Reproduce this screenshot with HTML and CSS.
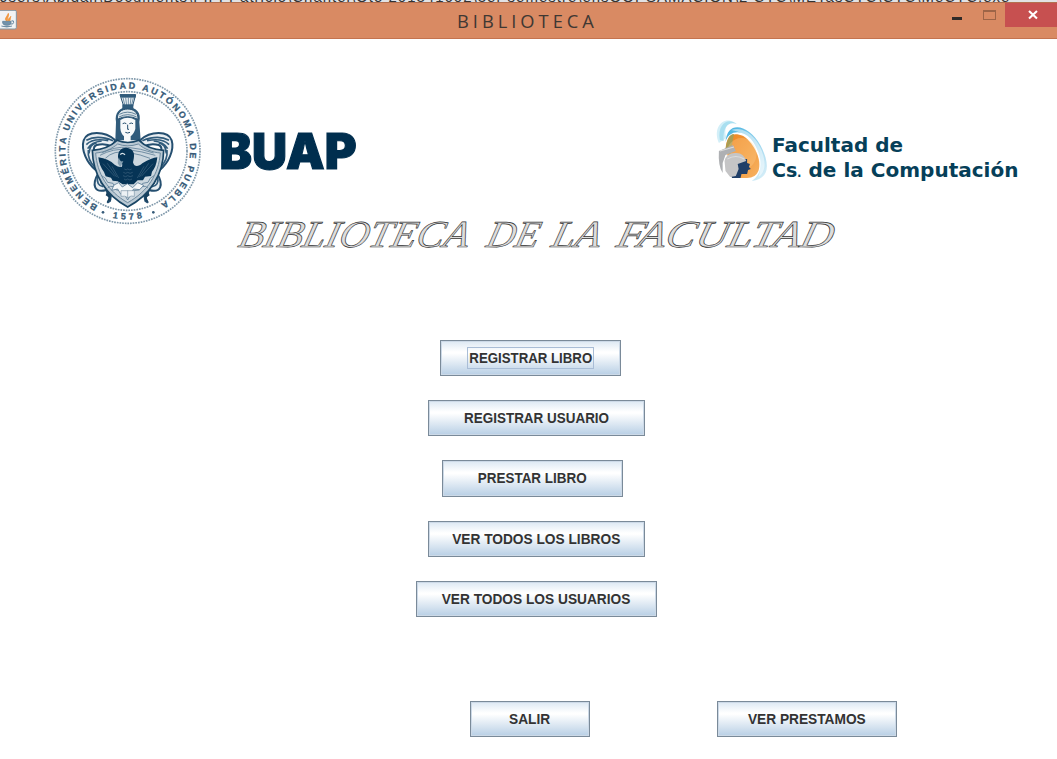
FILE: index.html
```html
<!DOCTYPE html>
<html lang="es">
<head>
<meta charset="utf-8">
<title>BIBLIOTECA</title>
<link rel="stylesheet" href="styles.css">
</head>
<body>
<div class="behind"><span>Jsers\Abigail\Documents\FIFI Patricio\Chantel\Oto 201341602\3er semestre\ensOOPSAMACION\2 CTC\METasCTC\CTC\MeCTC.exe</span></div>
<header class="titlebar">
  <svg class="java" width="17" height="20" viewBox="0 0 51 60">
    <rect x="-6" y="1" width="55" height="56" rx="4" fill="#f1f3f5" stroke="#8195a3" stroke-width="3"/>
    <path d="M22 35C10 27 19 24 25 10C29 18 19 23 24 35M26 34C23 27 28 24 33 19C29 26 33 28 28 35" fill="#f59a42" stroke="#ef8b2e" stroke-width="2"/>
    <path d="M8 34h25v5q0 7-12 7T8 39zM4 48q17 6 32 0" fill="#7191aa" stroke="#64859e" stroke-width="2.5"/>
    <path d="M34 33q8-3 7 4t-9 5" fill="none" stroke="#64859e" stroke-width="3"/>
  </svg>
  <h1 class="caption">BIBLIOTECA</h1>
  <div class="controls">
    <span class="min"></span>
    <span class="max"></span>
    <span class="close"><svg width="12" height="12" viewBox="0 0 12 12"><path d="M2 2l8 7.5M10 2L2 9.5" stroke="#fff" stroke-width="2.1"/></svg></span>
  </div>
</header>
<main>
  <div class="logos">
    <svg class="seal" width="165" height="160" viewBox="0 0 495 480">
      <defs>
        <path id="ring" d="M158 407A187 187 0 1 1 338 407"/>
        <path id="foot" d="M150 424A206 206 0 0 0 346 424"/>
      </defs>
      <g fill="none" stroke="#7f98aa" stroke-width="5" stroke-dasharray="5 3">
        <circle cx="248" cy="243" r="217"/>
        <circle cx="248" cy="243" r="178"/>
      </g>
      <g fill="#355a78" stroke="#355a78" stroke-width=".8" font-family="Liberation Sans, sans-serif" font-weight="700" font-size="27">
        <text textLength="976"><textPath href="#ring" textLength="976">BENEMÉRITA UNIVERSIDAD AUTÓNOMA DE PUEBLA</textPath></text>
        <text letter-spacing="10" text-anchor="middle"><textPath href="#foot" startOffset="52%">1578</textPath></text>
      </g>
      <circle cx="174" cy="427" r="4" fill="#355a78"/><circle cx="325" cy="427" r="4" fill="#355a78"/>
      <!-- ribbons -->
      <g fill="#e9eef2" stroke="#254f70" stroke-width="6">
        <path d="M210 210C180 183 126 181 116 211C107 241 127 280 151 299L166 274C145 250 141 230 155 225Q180 218 204 231z"/>
        <path d="M286 210C316 183 370 181 380 211C389 241 369 280 345 299L330 274C351 250 355 230 341 225Q316 218 292 231z"/>
        <path d="M160 310C139 345 148 370 184 360L196 388Q181 402 195 393L202 354L175 330z"/>
        <path d="M336 310C357 345 348 370 312 360L300 388Q315 402 301 393L294 354L321 330z"/>
      </g>
      <g fill="none" stroke="#315c7c" stroke-width="5">
        <path d="M124 211Q156 193 204 212M124 224Q143 203 190 212M128 236Q139 216 170 213M132 250Q134 222 155 219M150 292Q127 270 130 240M372 211Q340 193 292 212M372 224Q353 203 306 212M368 236Q357 216 326 213M364 250Q362 222 341 219M346 292Q369 270 366 240"/>
        <path d="M158 319Q153 347 175 350M168 326Q162 342 185 348M338 319Q343 347 321 350M328 326Q334 342 311 348"/>
      </g>
      <path d="M187 363q14 8 9 28l-10 6 5-15-9-6zM309 363q-14 8-9 28l10 6-5-15 9-6z" fill="#17415f"/>
      <!-- bust -->
      <path d="M225 74H272L263 108H236z" fill="#eef3f6" stroke="#254f70" stroke-width="3"/>
      <path d="M226 74h45v8h-42zM234 83l6 25M242 83l3 25M250 83v25M258 83l-3 25M265 83l-6 25M233 104h31v13h-31z" fill="#315c7c" stroke="#315c7c" stroke-width="2"/>
      <path d="M213 156C208 129 224 112 248 112C274 112 290 129 283 156L287 211H211z" fill="#315c7c"/>
      <path d="M217 148C216 127 230 117 248 117S280 127 279 148Q248 132 217 148z" fill="#dce5ea" stroke="#254f70" stroke-width="3"/>
      <path d="M223 133Q248 120 273 133M222 141Q248 127 275 141" fill="none" stroke="#4d718c" stroke-width="2.5"/>
      <path d="M226 150Q248 136 271 150V177Q266 193 257 199V216H237V199Q227 190 226 174z" fill="#f7f9fa"/>
      <path d="M233 161q6-4 11 0M253 161q6-4 11 0M248 164v14h4M241 187q7 4 14 0" fill="none" stroke="#234d6d" stroke-width="3"/>
      <!-- shield and eagle -->
      <path d="M142 241C170 239 199 227 216 211Q248 224 282 211C299 228 327 239 356 241C355 314 316 375 248 411C181 375 143 312 142 241z" fill="#b9c8d3" stroke="#194564" stroke-width="5"/>
      <path d="M152 249C179 247 201 236 218 222Q248 233 280 222C299 238 322 247 346 249C341 312 309 364 248 398C188 364 156 310 152 249z" fill="#ccd7df" stroke="#6d8a9f" stroke-width="3"/>
      <g fill="none" stroke="#5f8098" stroke-width="2.5">
        <path d="M165 256q40-22 83-17t83 17M170 249q40-20 78-17t78 17M181 265q25-25 67-18t67 18M170 317q13 5 18 20l16 3 10 20 18 2 16 28M327 317q-13 5-18 20l-16 3-10 20-18 2-17 28M188 354q8-8 17-4M309 354q-8-8-17-4"/>
      </g>
      <path d="M230 291C238 276 219 275 219 260C219 236 239 228 255 236C271 244 268 260 264 277C268 293 281 290 292 280Q320 263 337 262Q334 291 321 305L318 318L300 320L294 331L278 331L266 343H233L218 334L203 332L198 323L182 319L177 306Q162 286 160 262Q190 266 209 284Q221 293 230 291z" fill="#063456"/>
      <path d="M222 263q4 15 13 10l-8 18q-15-12-5-28" fill="#86a0b2"/>
      <path d="M240 254q-9-8-14 0" fill="none" stroke="#dbe5eb" stroke-width="4"/>
      <path d="M238 297q6 5 10 0q6 5 12 0M235 307q8 6 13 0q7 6 15 0M234 317q8 6 14 0q7 6 16 0M237 327q6 6 11 0q7 6 13 0M174 281l35 38M187 280l28 41M201 289l20 35M324 281l-35 38M311 280l-28 41M297 289l-20 35" fill="none" stroke="#3f647f" stroke-width="2"/>
      <path d="M207 345l14-7 11 13 15-10 16 12 15-15 18 8-12 13-18-2-10 14-15-6-14 7-9-15-18 4z" fill="#f5f7f8" stroke="#597b95" stroke-width="2.5"/>
      <path d="M228 362h40v17q-10-4-19 4-10-7-21-4zM248 361v21" fill="#edf2f5" stroke="#7c96a8" stroke-width="2"/>
    </svg>
    <svg class="buap" width="150" height="60" viewBox="0 0 150 60">
      <text x="3.5" y="48.5" textLength="137" lengthAdjust="spacingAndGlyphs">BUAP</text>
    </svg>
    <svg class="faculty" width="330" height="85" viewBox="0 0 330 85">
      <defs>
        <linearGradient id="orange" x2="1" y2="1"><stop offset="0" stop-color="#ef8420"/><stop offset=".5" stop-color="#f29b3d"/><stop offset="1" stop-color="#f7b263"/></linearGradient>
        <linearGradient id="blue" x2="1" y2="1"><stop offset="0" stop-color="#41b0df"/><stop offset="1" stop-color="#e2f3fa"/></linearGradient>
      </defs>
      <g transform="translate(4.5 0) scale(.94 1)">
        <path d="M10 33C3 18 14 6 26 12C18 12 15 19 18 28z" fill="#d3eff8"/>
        <path d="M11 30C8 14 20 7 29 14C20 11 14 17 15 31z" fill="#a9dff0"/>
        <path d="M17 32C19 9 42 15 54 35C65 54 64 69 45 71C60 62 55 42 44 29C35 19 20 20 17 32z" fill="url(#blue)"/>
        <path d="M23 20C40 14 56 34 58 49C60 58 57 64 52 67C59 49 47 23 23 20z" fill="#fff" opacity=".5"/>
        <path d="M17 40C18 24 25 22 36 26C48 34 56 50 52 61Q49 68 40 68H29z" fill="url(#orange)"/>
        <path d="M17 40Q19 24 26 24L22 45z" fill="#a99d53"/>
        <circle cx="34" cy="44" r="16" fill="#ffd397" opacity=".3"/>
        <path d="M24 49h16v4l3 1-1 3 2 2-3 1-1 4h-6l-1 4H24l-4-10z" fill="#203f68"/>
        <path d="M10 41L25 35L28 41L17 45L14 53V63Q9 56 10 41z" fill="#aeb0b3"/>
        <path d="M16 51Q18 43 27 43Q36 42 39 51L30 54L31 59L28 66L22 67L17 61z" fill="#c5c5c6"/>
        <path d="M11 41l15-4M19 49q9-5 18 0" fill="none" stroke="#ddd" stroke-width="1.2"/>
      </g>
      <g class="faculty-name">
        <text x="67" y="41.5" textLength="131" lengthAdjust="spacingAndGlyphs">Facultad de</text>
        <text x="67" y="67">Cs<tspan class="dot" dx="-1">.</tspan></text>
        <text x="103.5" y="67" textLength="210" lengthAdjust="spacingAndGlyphs">de la Computación</text>
      </g>
    </svg>
  </div>
  <svg class="heading" width="640" height="60" viewBox="0 0 640 60">
    <g transform="translate(0 42) skewX(-14)">
      <text x="12" y="0" textLength="230" lengthAdjust="spacingAndGlyphs">BIBLIOTECA</text>
      <text x="260" y="0" textLength="52" lengthAdjust="spacingAndGlyphs">DE</text>
      <text x="325" y="0" textLength="49" lengthAdjust="spacingAndGlyphs">LA</text>
      <text x="390" y="0" textLength="216" lengthAdjust="spacingAndGlyphs">FACULTAD</text>
    </g>
  </svg>
  <nav class="menu">
    <button class="btn w180 reg-libro"><span class="focus"><span class="label">REGISTRAR LIBRO</span></span></button>
    <button class="btn w216 reg-usuario"><span class="label">REGISTRAR USUARIO</span></button>
    <button class="btn w180 prestar"><span class="label">PRESTAR LIBRO</span></button>
    <button class="btn w216 ver-libros"><span class="label">VER TODOS LOS LIBROS</span></button>
    <button class="btn w240 ver-usuarios"><span class="label">VER TODOS LOS USUARIOS</span></button>
  </nav>
  <div class="actions">
    <button class="btn w120"><span class="label">SALIR</span></button>
    <button class="btn w180"><span class="label">VER PRESTAMOS</span></button>
  </div>
</main>
</body>
</html>
```
FILE: styles.css
```css
* { box-sizing: border-box; }
body {
  margin: 0;
  width: 1057px;
  height: 759px;
  overflow: hidden;
  background: #fff;
  font-family: "Liberation Sans", Arial, sans-serif;
}
.behind {
  display: flex;
  align-items: flex-end;
  height: 2px;
  overflow: hidden;
  background: #e2e2e4;
  color: #333;
  font-size: 15px;
  line-height: 10px;
  letter-spacing: 1px;
  white-space: nowrap;
}
.behind span { flex: none; }
.titlebar {
  display: grid;
  grid-template-columns: 17px 1fr 121px;
  height: 37px;
  background: #d98a63;
  border-top: 1px solid #b3704f;
  border-bottom: 1px solid #c4734f;
}
.java { margin-top: 7px; }
.caption {
  margin: 0;
  padding-left: 440px;
  font: 400 18.3px/35px "Open Sans", "Noto Sans", sans-serif;
  letter-spacing: 4px;
  color: #3f3833;
}
.controls { display: flex; align-items: flex-start; }
.min { width: 10px; height: 3px; margin: 14px 0 0 16px; background: #302a28; }
.max { width: 13px; height: 10px; margin: 7px 0 0 21px; border: 1px solid #9d6447; border-top-width: 2px; }
.close {
  display: flex;
  justify-content: center;
  align-items: center;
  width: 52px;
  height: 24px;
  margin-left: 9px;
  padding-left: 4px;
  background: #c75050;
}
.logos { display: flex; height: 166px; padding: 31px 0 0 45px; }
.seal { flex: none; }
.buap { flex: none; margin: 50px 0 0 6px; }
.buap text {
  font: 900 49px Inter, "Liberation Sans", sans-serif;
  fill: #002e4e;
  stroke: #002e4e;
  stroke-width: 1.2px;
}
.faculty { flex: none; margin: 40px 0 0 339px; }
.faculty-name { font: 700 19px "DejaVu Sans", sans-serif; fill: #063f59; }
.faculty-name .dot { font-weight: 400; }
.heading { display: block; margin-left: 225px; }
.heading text {
  font: italic 400 38px "Liberation Serif", serif;
  fill: #ddd;
  stroke: #333;
  stroke-width: .65px;
}
.menu { display: flex; flex-direction: column; align-items: flex-start; gap: 24px; padding-top: 75px; }
.btn {
  display: flex;
  justify-content: center;
  align-items: center;
  flex: none;
  height: 36.2px;
  margin: 0;
  padding: 0;
  border: 1px solid #7a8a99;
  box-shadow: inset 0 0 0 1px #ccd9e7;
  background: linear-gradient(#dce8f3, #fff 32%, #fff 36%, #b8cfe5);
  font: 700 14.4px/18px "Liberation Sans", Arial, sans-serif;
  color: #333;
}
.label { display: block; transform: scaleX(.935); white-space: nowrap; }
.w120 { width: 120px; }
.w180 { width: 180.5px; }
.w216 { width: 216.5px; }
.w240 { width: 240.5px; }
.reg-libro { margin-left: 440px; }
.reg-usuario, .ver-libros { margin-left: 428px; }
.prestar { margin-left: 442.3px; }
.ver-usuarios { margin-left: 416px; }
.focus {
  display: flex;
  justify-content: center;
  align-items: center;
  width: 127px;
  height: 22px;
  border: 1px solid #a9bdd6;
}
.reg-libro .label { transform: scaleX(.92); }
.ver-libros .label, .ver-usuarios .label, .actions .label { transform: scaleX(.953); }
.actions { display: flex; gap: 126.5px; padding: 84px 0 0 470px; }
```
